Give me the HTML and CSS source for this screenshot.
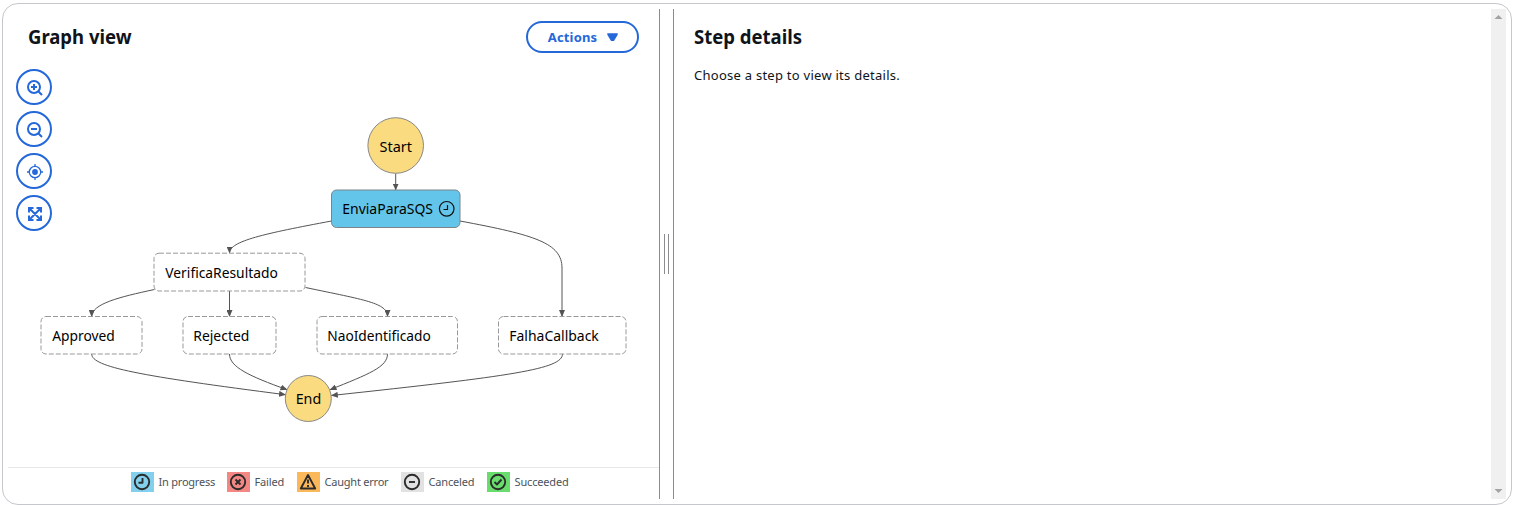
FILE: index.html
```html
<!DOCTYPE html>
<html lang="en">
<head>
<meta charset="utf-8">
<title>Graph view</title>
<link rel="stylesheet" href="styles.css">
</head>
<body>
<main class="panel">
  <section class="graph-pane">
    <header class="graph-header">
      <h2 class="title title-graph">Graph view</h2>
      <button class="actions"><span>Actions</span><svg width="11" height="9" viewBox="0 0 11 9"><path d="M.3.3h10.400v1.400L7 8H4L.3 1.700z" fill="#2468d9"/></svg></button>
    </header>
    <div class="workspace">
      <nav class="tools">
        <button class="tool" aria-label="Zoom in"><svg class="tool-icon" viewBox="0 0 16 16"><circle cx="7" cy="7" r="6"/><path d="M7 4v6M4 7h6M11 11l4 4"/></svg></button>
        <button class="tool" aria-label="Zoom out"><svg class="tool-icon" viewBox="0 0 16 16"><circle cx="7" cy="7" r="6"/><path d="M4 7h6M11 11l4 4"/></svg></button>
        <button class="tool" aria-label="Center"><svg class="tool-icon thin" viewBox="0 0 16 16"><circle cx="8" cy="8" r="5.700"/><circle class="dot" cx="8" cy="8" r="2.900"/><path d="M8 0v2.500M8 13.500V16M0 8h2.500M13.500 8H16"/></svg></button>
        <button class="tool" aria-label="Fit"><svg class="tool-icon" viewBox="0 0 16 16"><path d="M2 6.500V2h4.500M9.500 2H14v4.500M14 9.500V14H9.500M6.500 14H2V9.500M2 2l12 12M14 2L2 14"/></svg></button>
      </nav>
      <svg class="graph" width="600" height="400" viewBox="52 67 600 400">
        <defs>
          <marker id="arrow" viewBox="0 0 7 6" refX="6.500" refY="3" markerWidth="7" markerHeight="6" markerUnits="userSpaceOnUse" orient="auto"><path d="M0 0l7 3-7 3z" fill="#545454"/></marker>
        </defs>
        <g class="edges">
          <path d="M395.700 173.500V190"/>
          <path d="M331.500 221C265 233.500 229.500 241 229.500 253"/>
          <path d="M460 221C535 235 562 243 562 268V316.500"/>
          <path d="M154.500 289.500C119 297 91.700 304 91.700 316.500"/>
          <path d="M229.500 291V316.500"/>
          <path d="M305.500 287.500C365 300 387.500 303 387.500 316.500"/>
          <path d="M91.700 354C91.700 367 140 376 285.500 394.700"/>
          <path d="M229.500 354C229.500 367 249 376 287 389.700"/>
          <path d="M387.500 354C387.500 367 369 374 330 389.700"/>
          <path d="M562.500 354C562.500 369 513 376 331.300 395.500"/>
        </g>
        <g class="terminals">
          <circle cx="395.700" cy="145.500" r="27.800"/>
          <circle cx="308.300" cy="398.500" r="23"/>
        </g>
        <rect class="active" x="331.500" y="190" width="128.500" height="37.500" rx="5"/>
        <g class="pending">
          <rect x="154" y="253.200" width="151" height="37.800" rx="5"/>
          <rect x="41" y="316.500" width="101" height="37.500" rx="5"/>
          <rect x="183" y="316.500" width="93" height="37.500" rx="5"/>
          <rect x="317" y="316.500" width="140.500" height="37.500" rx="5"/>
          <rect x="498.500" y="316.500" width="127.500" height="37.500" rx="5"/>
        </g>
        <g class="clock"><circle cx="446.700" cy="208.800" r="7.300"/><path d="M447.500 205v4.500h-4"/></g>
        <g class="labels">
          <text x="379.500" y="152" textLength="32.500" lengthAdjust="spacingAndGlyphs">Start</text>
          <text x="342.300" y="214" textLength="90.700" lengthAdjust="spacingAndGlyphs">EnviaParaSQS</text>
          <text x="165.300" y="277.700" textLength="112.500" lengthAdjust="spacingAndGlyphs">VerificaResultado</text>
          <text x="52.300" y="341" textLength="62.500" lengthAdjust="spacingAndGlyphs">Approved</text>
          <text x="193.300" y="341" textLength="56" lengthAdjust="spacingAndGlyphs">Rejected</text>
          <text x="327.300" y="341" textLength="103.400" lengthAdjust="spacingAndGlyphs">NaoIdentificado</text>
          <text x="509.300" y="341" textLength="89.500" lengthAdjust="spacingAndGlyphs">FalhaCallback</text>
          <text x="295.700" y="404" textLength="25.500" lengthAdjust="spacingAndGlyphs">End</text>
        </g>
      </svg>
    </div>
    <footer class="legend">
      <div class="item"><span class="swatch progress"><svg class="status" viewBox="0 0 18 18"><circle cx="9" cy="9" r="7.200"/><path d="M9.500 5v4.800H5.500"/></svg></span><span>In progress</span></div>
      <div class="item"><span class="swatch failed"><svg class="status" viewBox="0 0 18 18"><circle cx="9" cy="9" r="7.200"/><path d="M6.500 6.500l5 5M11.500 6.500l-5 5"/></svg></span><span>Failed</span></div>
      <div class="item"><span class="swatch caught"><svg class="status" viewBox="0 0 18 18"><path d="M9 2L1.800 15.500h14.400zM9 6.500v4M9 12v2"/></svg></span><span>Caught error</span></div>
      <div class="item"><span class="swatch canceled"><svg class="status" viewBox="0 0 18 18"><circle cx="9" cy="9" r="7.200"/><path d="M6 9h6"/></svg></span><span>Canceled</span></div>
      <div class="item"><span class="swatch succeeded"><svg class="status" viewBox="0 0 18 18"><circle cx="9" cy="9" r="7.200"/><path d="M5.500 9l2.500 2.500 4.500-5"/></svg></span><span>Succeeded</span></div>
    </footer>
  </section>
  <div class="splitter"><span class="grip"></span></div>
  <section class="details">
    <div class="details-body">
      <h2 class="title title-details">Step details</h2>
      <p class="hint">Choose a step to view its details.</p>
    </div>
    <div class="scrollbar"><svg width="9" height="4" viewBox="0 0 9 4"><path d="M.5 4l4-4 4 4z" fill="#a3a3a3"/></svg><svg width="9" height="4" viewBox="0 0 9 4"><path d="M.5 0l4 4 4-4z" fill="#a3a3a3"/></svg></div>
  </section>
</main>
</body>
</html>
```
FILE: styles.css
```css
* { box-sizing: border-box; }
body {
  margin: 0;
  padding: 3px 3px 0 2px;
  height: 505px;
  overflow: hidden;
  background: #fff;
  color: #0f141a;
  font-family: "Noto Sans", sans-serif;
}
.panel {
  display: flex;
  height: 502px;
  padding: 5px;
  border: 1px solid #c6c6cd;
  border-radius: 16px;
}
.graph-pane {
  display: flex;
  flex-direction: column;
  flex: 0 0 652px;
  height: 490px;
  border-right: 1px solid #8b8c90;
}
.graph-header {
  display: flex;
  justify-content: space-between;
  height: 58px;
  padding: 12px 20px 0;
}
.title {
  margin: 0;
  width: max-content;
  font-size: 20px;
  line-height: 32px;
  font-weight: 700;
  transform-origin: 0 50%;
}
.title-graph { transform: scaleX(.925); }
.title-details { transform: scaleX(.926); }
.actions {
  display: flex;
  align-items: center;
  justify-content: center;
  gap: 10px;
  width: 113px;
  height: 32px;
  padding: 0 0 0 1px;
  border: 2px solid #2468d9;
  border-radius: 16px;
  background: #fff;
  color: #2468d9;
  font: 700 13px "Noto Sans", sans-serif;
  letter-spacing: 0.15px;
}
.workspace {
  display: flex;
  height: 400px;
}
.tools {
  display: flex;
  flex-direction: column;
  flex: 0 0 44px;
  gap: 6px;
  padding: 2px 0 0 8px;
}
.tool {
  display: flex;
  align-items: center;
  justify-content: center;
  width: 36px;
  height: 36px;
  padding: 2px 0 0 2px;
  border: 2px solid #2468d9;
  border-radius: 50%;
  background: #fff;
}
.tool-icon {
  width: 16px;
  height: 16px;
  fill: none;
  stroke: #2468d9;
  stroke-width: 2;
}
.thin { stroke-width: 1.3; }
.tool-icon .dot { fill: #2468d9; stroke: none; }
.graph {
  flex: none;
  overflow: visible;
}
.edges path {
  fill: none;
  stroke: #545454;
  stroke-width: 1;
  marker-end: url(#arrow);
}
.terminals circle { fill: #fadb80; stroke: #888; }
.active { fill: #64c5ea; stroke: #7c8488; }
.pending rect { fill: #fff; stroke: #999; stroke-dasharray: 5 2; }
.clock { fill: none; stroke: #111; stroke-width: 1.2; }
.labels { font-size: 15px; fill: #000; }
.legend {
  display: flex;
  flex: 0 0 32px;
  gap: 12px;
  padding: 4px 0 0 123px;
  border-top: 1px solid #e5e7e9;
  color: #4b525a;
  font-size: 11px;
  line-height: 20px;
  letter-spacing: -0.18px;
}
.item {
  display: flex;
  align-items: flex-start;
  gap: 4.6px;
  height: 20px;
  white-space: nowrap;
}
.swatch {
  display: flex;
  align-items: center;
  justify-content: center;
  width: 23px;
  height: 20px;
  padding-right: 1px;
}
.item:nth-child(1) { width: 84px; }
.item:nth-child(2) { width: 58px; }
.item:nth-child(3) { width: 92px; }
.item:nth-child(4) { width: 74px; }
.item:nth-child(1), .item:nth-child(3) { letter-spacing: -0.23px; }
.progress { background: #82d0ee; }
.failed { background: #f28783; }
.caught { background: #fbb85b; }
.canceled { background: #e2e2e2; }
.succeeded { background: #68dc6c; }
.status {
  width: 18px;
  height: 18px;
  fill: none;
  stroke: #2b2b2b;
  stroke-width: 1.9;
  stroke-linejoin: round;
}
.splitter {
  display: flex;
  align-items: center;
  justify-content: center;
  flex: 0 0 13px;
  height: 490px;
}
.grip {
  width: 5px;
  height: 40px;
  border: solid #8b8c90;
  border-width: 0 1px;
}
.details {
  display: flex;
  flex: 1;
  height: 490px;
  border-left: 1px solid #8b8c90;
}
.details-body { flex: 1; padding: 12px 20px; }
.hint {
  margin: 12px 0 0;
  font-size: 13px;
  font-weight: 450;
  line-height: 20px;
  letter-spacing: 0.26px;
}
.scrollbar {
  display: flex;
  flex-direction: column;
  align-items: center;
  justify-content: space-between;
  width: 15px;
  padding: 6px 0;
  background: #f0f0f0;
}
```
